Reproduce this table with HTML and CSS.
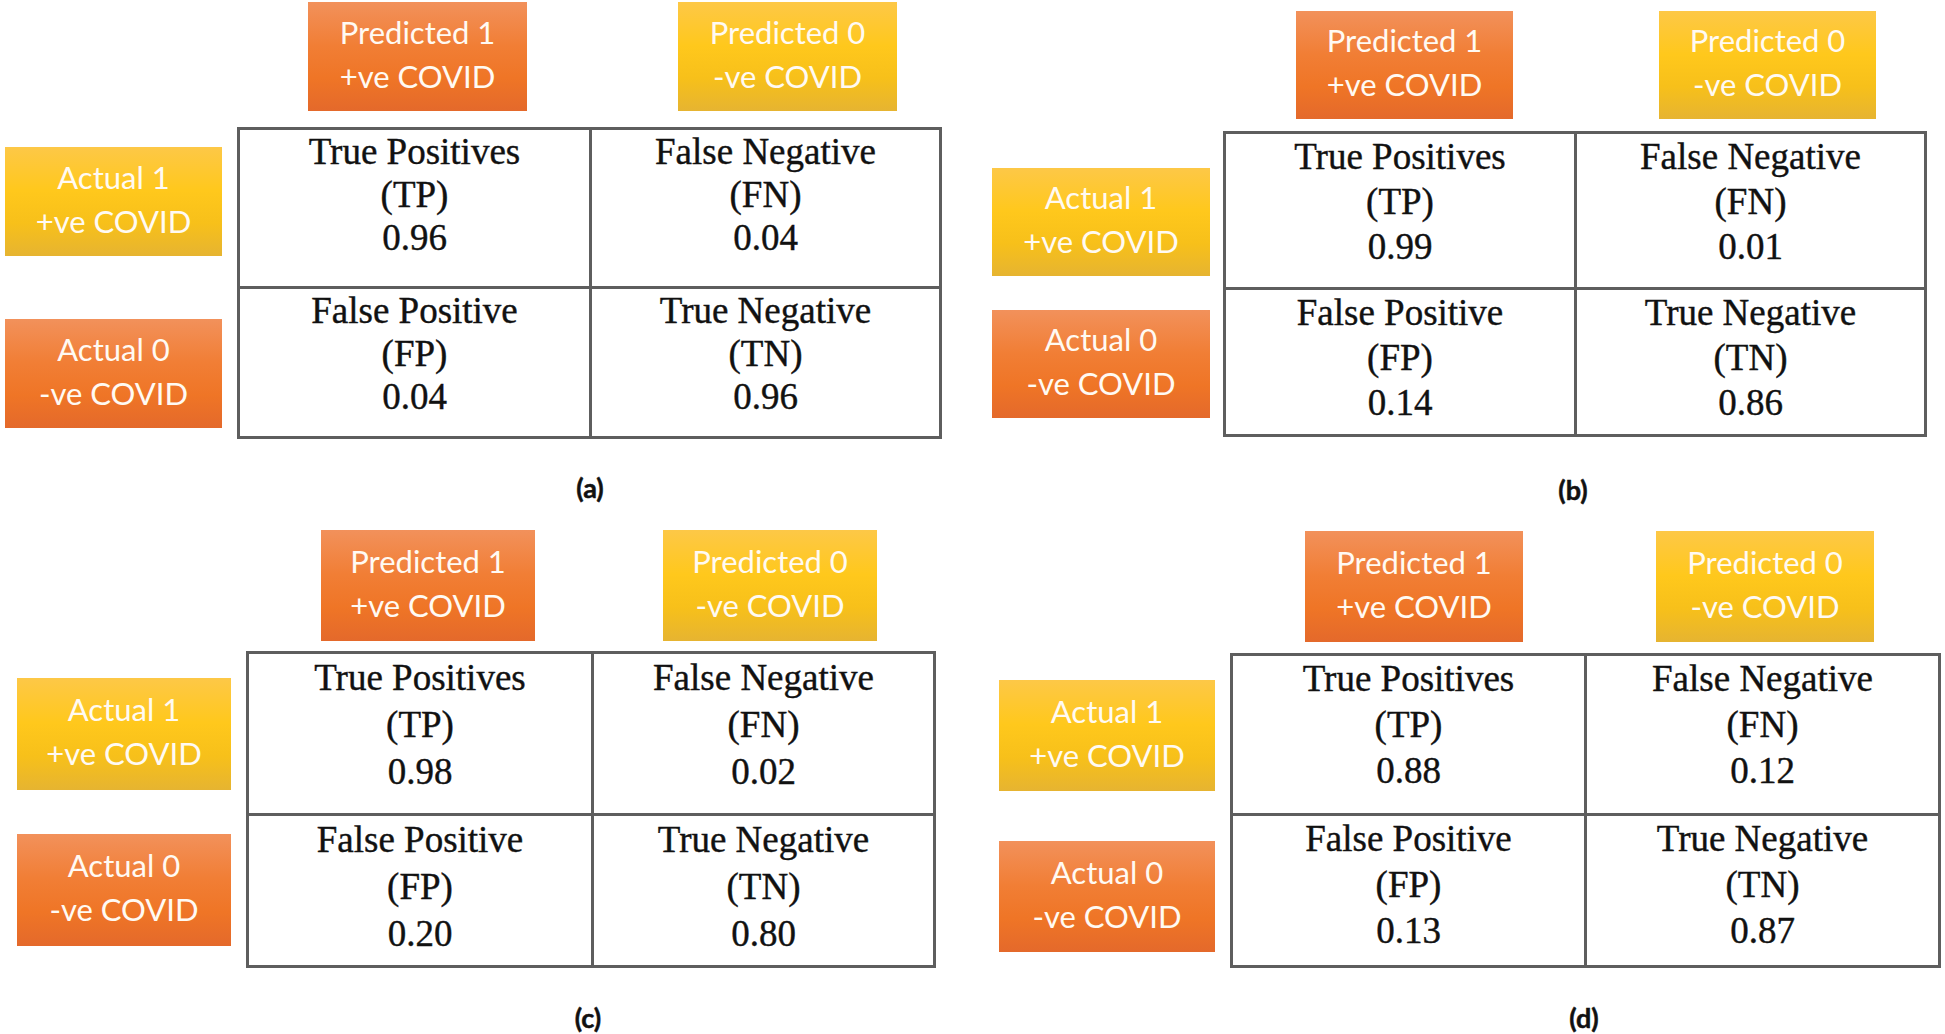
FILE: index.html
```html
<!DOCTYPE html>
<html lang="en">
<head>
<meta charset="utf-8">
<title>Confusion matrices</title>
<link rel="stylesheet" href="styles.css">
</head>
<body>
<main class="page">

  <section class="panel panel-a">
    <div class="heads">
      <div class="box orange">Predicted 1<br>+ve COVID</div>
      <div class="box yellow">Predicted 0<br>-ve COVID</div>
    </div>
    <div class="body">
      <div class="labels">
        <div class="box yellow">Actual 1<br>+ve COVID</div>
        <div class="box orange">Actual 0<br>-ve COVID</div>
      </div>
      <div class="matrix">
        <div class="cell">True Positives<br>(TP)<br>0.96</div>
        <div class="cell">False Negative<br>(FN)<br>0.04</div>
        <div class="cell">False Positive<br>(FP)<br>0.04</div>
        <div class="cell">True Negative<br>(TN)<br>0.96</div>
      </div>
    </div>
    <div class="caption">(a)</div>
  </section>

  <section class="panel panel-b">
    <div class="heads">
      <div class="box orange">Predicted 1<br>+ve COVID</div>
      <div class="box yellow">Predicted 0<br>-ve COVID</div>
    </div>
    <div class="body">
      <div class="labels">
        <div class="box yellow">Actual 1<br>+ve COVID</div>
        <div class="box orange">Actual 0<br>-ve COVID</div>
      </div>
      <div class="matrix">
        <div class="cell">True Positives<br>(TP)<br>0.99</div>
        <div class="cell">False Negative<br>(FN)<br>0.01</div>
        <div class="cell">False Positive<br>(FP)<br>0.14</div>
        <div class="cell">True Negative<br>(TN)<br>0.86</div>
      </div>
    </div>
    <div class="caption">(b)</div>
  </section>

  <section class="panel panel-c">
    <div class="heads">
      <div class="box orange">Predicted 1<br>+ve COVID</div>
      <div class="box yellow">Predicted 0<br>-ve COVID</div>
    </div>
    <div class="body">
      <div class="labels">
        <div class="box yellow">Actual 1<br>+ve COVID</div>
        <div class="box orange">Actual 0<br>-ve COVID</div>
      </div>
      <div class="matrix">
        <div class="cell">True Positives<br>(TP)<br>0.98</div>
        <div class="cell">False Negative<br>(FN)<br>0.02</div>
        <div class="cell">False Positive<br>(FP)<br>0.20</div>
        <div class="cell">True Negative<br>(TN)<br>0.80</div>
      </div>
    </div>
    <div class="caption">(c)</div>
  </section>

  <section class="panel panel-d">
    <div class="heads">
      <div class="box orange">Predicted 1<br>+ve COVID</div>
      <div class="box yellow">Predicted 0<br>-ve COVID</div>
    </div>
    <div class="body">
      <div class="labels">
        <div class="box yellow">Actual 1<br>+ve COVID</div>
        <div class="box orange">Actual 0<br>-ve COVID</div>
      </div>
      <div class="matrix">
        <div class="cell">True Positives<br>(TP)<br>0.88</div>
        <div class="cell">False Negative<br>(FN)<br>0.12</div>
        <div class="cell">False Positive<br>(FP)<br>0.13</div>
        <div class="cell">True Negative<br>(TN)<br>0.87</div>
      </div>
    </div>
    <div class="caption">(d)</div>
  </section>

</main>
</body>
</html>
```

FILE: styles.css
```css
* { box-sizing: border-box; }

html, body {
  margin: 0;
  padding: 0;
  background: #ffffff;
}

.page {
  display: grid;
  grid-template-columns: 980px 965px;
  grid-template-rows: 510px 524px;
  width: 1945px;
  height: 1034px;
  overflow: hidden;
}

.panel {
  display: flex;
  flex-direction: column;
}

/* header boxes */
.heads {
  display: flex;
  align-items: flex-start;
  padding-top: var(--ht);
  padding-left: var(--hl);
  gap: var(--hg);
}

.heads .box {
  width: var(--hw);
  height: var(--hh);
}

.box {
  display: flex;
  align-items: center;
  justify-content: center;
  padding-bottom: 6px;
  text-align: center;
  font-family: Lato, "Open Sans", "Liberation Sans", sans-serif;
  font-size: 31px;
  line-height: 44px;
  color: #fffaf3;
}

.orange {
  background: linear-gradient(180deg, #f2915b 0%, #f17e35 40%, #ef7526 70%, #e4692b 100%);
}

.yellow {
  background: linear-gradient(180deg, #fdc847 0%, #ffc81c 40%, #f7c01a 70%, #e6b431 100%);
}

/* body: labels + matrix */
.body {
  display: flex;
  align-items: flex-start;
  margin-top: var(--bt);
}

.labels {
  width: var(--lw);
  flex: none;
  display: flex;
  flex-direction: column;
  padding-top: var(--lt);
  padding-left: var(--ll);
  gap: var(--lg);
}

.labels .box {
  width: var(--lbw);
  height: var(--lbh);
}

.matrix {
  display: grid;
  grid-template-columns: var(--c1) var(--c2);
  grid-template-rows: var(--r1) var(--r2);
  gap: 3px;
  padding: 3px;
  background: #5e5e5e;
}

.cell {
  background: #ffffff;
  text-align: center;
  font-family: "Liberation Serif", "Times New Roman", serif;
  font-size: 37px;
  line-height: var(--lh);
  color: #111111;
  -webkit-text-stroke: 0.4px #111111;
}

.caption {
  margin-top: var(--ct);
  margin-left: var(--cl);
  width: 200px;
  text-align: center;
  font-family: Lato, "Open Sans", "Liberation Sans", sans-serif;
  font-weight: 700;
  font-size: 27px;
  line-height: 30px;
  color: #111111;
  -webkit-text-stroke: 0.5px #111111;
}

/* per-panel geometry */
.panel-a {
  --ht: 2px;  --hl: 308px; --hg: 151px; --hw: 219px; --hh: 109px;
  --bt: 16px;
  --lw: 237px; --lt: 20px; --ll: 5px; --lg: 63px; --lbw: 217px; --lbh: 109px;
  --c1: 349px; --c2: 347px; --r1: 156px; --r2: 147px;
  --lh: 43px;
  --ct: 34px; --cl: 490px;
}

.panel-b {
  --ht: 11px; --hl: 316px; --hg: 146px; --hw: 217px; --hh: 108px;
  --bt: 12px;
  --lw: 243px; --lt: 37px; --ll: 12px; --lg: 34px; --lbw: 218px; --lbh: 108px;
  --c1: 348px; --c2: 347px; --r1: 153px; --r2: 144px;
  --lh: 45px;
  --ct: 38px; --cl: 493px;
}

.panel-c {
  --ht: 20px; --hl: 321px; --hg: 128px; --hw: 214px; --hh: 111px;
  --bt: 10px;
  --lw: 246px; --lt: 27px; --ll: 17px; --lg: 44px; --lbw: 214px; --lbh: 112px;
  --c1: 342px; --c2: 339px; --r1: 159px; --r2: 149px;
  --lh: 47px;
  --ct: 35px; --cl: 488px;
}

.panel-d {
  --ht: 21px; --hl: 325px; --hg: 133px; --hw: 218px; --hh: 111px;
  --bt: 11px;
  --lw: 250px; --lt: 27px; --ll: 19px; --lg: 50px; --lbw: 216px; --lbh: 111px;
  --c1: 351px; --c2: 351px; --r1: 157px; --r2: 149px;
  --lh: 46px;
  --ct: 35px; --cl: 504px;
}
```
